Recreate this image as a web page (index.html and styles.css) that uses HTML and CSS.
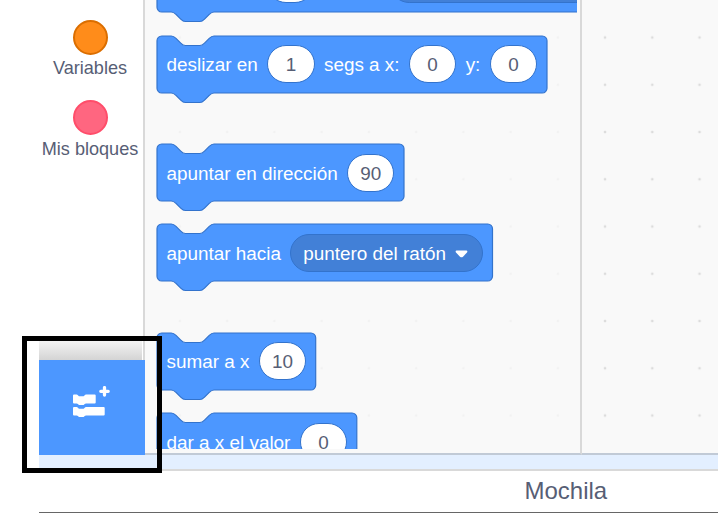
FILE: index.html
```
<!DOCTYPE html>
<html lang="es">
<head>
<meta charset="utf-8">
<title>Bloques</title>
<link rel="stylesheet" href="styles.css">
</head>
<body>
<div class="app">
  <main class="editor">
    <nav class="categories">
      <div class="category"><span class="dot dot-variables"></span><span>Variables</span></div>
      <div class="category"><span class="dot dot-custom"></span><span>Mis bloques</span></div>
      <div class="category-end"></div>
      <button class="extension" aria-label="Extensiones">
        <svg width="40" height="34" viewBox="0 0 40 34" fill="#fff">
          <path d="M2 9.6q0-1 1-1h2.6q.8 0 1.3.6l.5.5q.5.5 1.3.5h3.2q.8 0 1.3-.5l.5-.5q.5-.6 1.3-.6h8.700q1 0 1 1v7q0 1-1 1h-8.700q-.8 0-1.300.5l-.5.5q-.5.5-1.300.5h-3.200q-.8 0-1.300-.5l-.5-.5q-.5-.5-1.300-.5H3q-1 0-1-1z"/>
          <path d="M2 22.100q0-1 1-1h2.600q.8 0 1.300.6l.5.5q.5.5 1.300.5h3.200q.8 0 1.300-.5l.5-.5q.5-.6 1.300-.6h17.700q1 0 1 1v6.500q0 1-1 1h-17.700q-.8 0-1.300.5l-.5.5q-.5.5-1.300.5h-3.200q-.8 0-1.300-.5l-.5-.5q-.5-.5-1.300-.5H3q-1 0-1-1z"/>
          <path d="M33.500 1.600v7.400M29.800 5.300h7.400" stroke="#fff" stroke-width="3.300" stroke-linecap="round"/>
        </svg>
      </button>
    </nav>
    <section class="palette">
      <div class="blocks">
        <div class="block first wide"><svg class="shape"></svg><span class="blank-a"></span><span class="input"></span><span class="blank-b"></span><span class="menu menu-wide"></span></div>
        <div class="block near glide"><svg class="shape"></svg><span class="label">deslizar en</span><span class="input">1</span><span class="label">segs a x:</span><span class="input">0</span><span class="label">y:</span><span class="input">0</span></div>
        <div class="block far direction"><svg class="shape"></svg><span class="label">apuntar en dirección</span><span class="input">90</span></div>
        <div class="block near towards"><svg class="shape"></svg><span class="label">apuntar hacia</span><span class="menu"><span class="label">puntero del ratón</span><svg class="arrow" width="13" height="8" viewBox="0 0 13 8"><path d="M1.700.5h9.600q1.400.2 1 1.500-.2.500-.8 1.100L8 6.700q-1.500 1.200-3 0L1.500 3.100Q.9 2.500.7 2 .3.700 1.700.5z" fill="#fff"/></svg></span></div>
        <div class="block far change"><svg class="shape"></svg><span class="label">sumar a x</span><span class="input">10</span></div>
        <div class="block near set"><svg class="shape"></svg><span class="label">dar a x el valor</span><span class="input">0</span></div>
      </div>
    </section>
    <section class="workspace"></section>
  </main>
  <div class="strip"></div>
  <footer class="backpack">Mochila</footer>
  <div class="highlight"></div>
</div>
<script src="script.js"></script>
</body>
</html>
```
FILE: styles.css
```
* { box-sizing: border-box; }
body {
  margin: 0;
  background: #fff;
  font-family: "Liberation Sans", Arial, sans-serif;
  color: #575e75;
}
.app {
  position: relative;
  width: 718px;
  height: 514px;
  overflow: hidden;
  display: flex;
  flex-direction: column;
}
.editor {
  height: 455px;
  display: grid;
  grid-template-columns: 145px 437px 136px;
}
.categories {
  display: flex;
  flex-direction: column;
  height: 455px;
  padding: 20px 0 0 39px;
  background: linear-gradient(#d9d9d9, #d9d9d9) right top / 2px 100% no-repeat;
}
.category {
  display: flex;
  flex-direction: column;
  align-items: center;
  gap: 3px;
  height: 80px;
  width: 102px;
  font-size: 18.100px;
  line-height: 21px;
  white-space: nowrap;
}
.category + .category { gap: 4px; }
.dot {
  width: 35px;
  height: 35px;
  flex: none;
  border: 2px solid;
  border-radius: 50%;
}
.dot-variables { background: #ff8c1a; border-color: #db6e00; }
.dot-custom { background: #ff6680; border-color: #ff4d6a; }
.category-end {
  width: 103px;
  height: 20px;
  margin-top: auto;
  background: linear-gradient(#f5f5f5, #d4d4d4);
}
.extension {
  display: flex;
  justify-content: center;
  width: 106px;
  height: 95px;
  padding: 26px 0 0;
  border: 0;
  background: #4c97ff;
}
.extension svg { margin-right: 2px; }
.palette {
  height: 455px;
  border-right: 2px solid #d9d9d9;
  border-bottom: 2px solid #c1cad6;
  background: radial-gradient(circle, #f2f2f2 1px, transparent 1.700px) 11.300px 13.900px / 47.250px 47.250px #f9f9f9;
}
.blocks {
  width: 432px;
  height: 449px;
  padding-left: 12px;
  overflow: hidden;
}
.block {
  position: relative;
  display: flex;
  align-items: center;
  gap: 9.300px;
  height: 57px;
  padding-left: 9.500px;
  font-size: 18.900px;
  line-height: 22px;
  color: #fff;
  white-space: nowrap;
}
.block > * { position: relative; flex: none; }
.block .label { padding-top: 2px; }
.block .shape {
  position: absolute;
  left: -1px;
  top: -1px;
  width: calc(100% + 2px);
  height: 69px;
  overflow: visible;
}
.first { margin-top: -44.800px; }
.near { margin-top: 23.300px; }
.far { margin-top: 51.600px; }
.wide { width: 460px; }
.glide { width: 390px; }
.direction { width: 247px; }
.towards { width: 335.500px; }
.change { width: 158.700px; }
.set { width: 199.800px; }
.blank-a { width: 91px; }
.blank-b { width: 57px; }
.input {
  width: 47.500px;
  height: 38px;
  border: 1px solid #3373cc;
  border-radius: 19px;
  background: #fff;
  color: #575e75;
  line-height: 37px;
  text-align: center;
}
.menu {
  display: flex;
  align-items: center;
  gap: 9px;
  height: 38.500px;
  width: 109.500px;
  padding-left: 12px;
  border: 1px solid #3373cc;
  border-radius: 19.250px;
  background: #4280d7;
}
.menu .arrow { margin-top: 2px; }
.towards .menu { width: 193px; }
.menu-wide { width: 205px; }
.workspace {
  height: 455px;
  border-bottom: 2px solid #c1cad6;
  background: radial-gradient(circle, #dcdcdc 1px, transparent 1.700px) -.6px 13.900px / 47.250px 47.250px #f9f9f9;
}
.strip {
  height: 16px;
  margin-left: 39px;
  border-bottom: 2px solid #d9d9d9;
  background: #e3efff;
}
.backpack {
  height: 42px;
  margin-left: 39px;
  border-bottom: 1px solid #666;
  padding-left: 485.500px;
  font-size: 24px;
  line-height: 40px;
}
.highlight {
  position: absolute;
  left: 22px;
  top: 336px;
  width: 140px;
  height: 137px;
  border: 5px solid #000;
}
```
FILE: script.js
```
// Draws the stack-block outline behind every block at its own width.
const U = 1.1875;
document.querySelectorAll('.block').forEach((block) => {
  const w = block.getBoundingClientRect().width / U;
  const path = document.createElementNS('http://www.w3.org/2000/svg', 'path');
  path.setAttribute('d', `M0 4A4 4 0 0 1 4 0H12c2 0 3 1 4 2l4 4c1 1 2 2 4 2h12c2 0 3-1 4-2l4-4c1-1 2-2 4-2H${w - 4}a4 4 0 0 1 4 4v40a4 4 0 0 1-4 4H48c-2 0-3 1-4 2l-4 4c-1 1-2 2-4 2h-12c-2 0-3-1-4-2l-4-4c-1-1-2-2-4-2H4a4 4 0 0 1-4-4z`);
  path.setAttribute('transform', `translate(1 1) scale(${U})`);
  path.setAttribute('fill', '#4c97ff');
  path.setAttribute('stroke', '#3373cc');
  block.querySelector('.shape').append(path);
});
```
